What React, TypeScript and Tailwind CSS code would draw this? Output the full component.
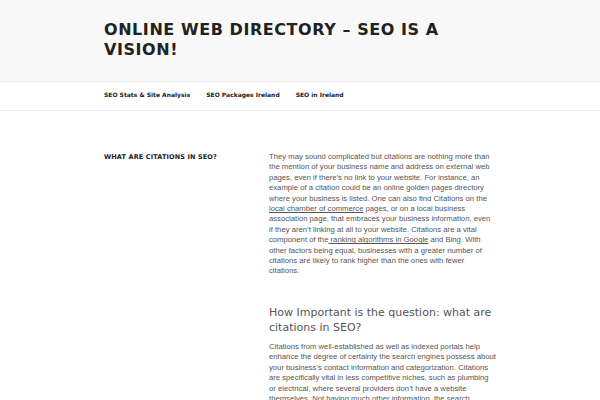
export default function App() {
  return (
    <div className="min-h-screen w-full bg-white overflow-hidden">
      {/* Header */}
      <header className="bg-[#f8f8f8] h-[81px]">
        <div className="w-[392px] mx-auto pt-[20px]">
          <h1 className="font-['DejaVu_Sans',sans-serif] font-bold uppercase text-[#222] text-[16px] leading-[20px] tracking-[0.035em]">
            Online Web Directory – SEO is a Vision!
          </h1>
        </div>
      </header>

      {/* Nav */}
      <nav className="border-y border-[#eeeeee] h-[30px] flex items-center pb-[4px]">
        <ul className="w-[392px] mx-auto flex gap-[16px] font-['DejaVu_Sans',sans-serif] font-bold text-[6px] text-[#222]">
          <li>SEO Stats &amp; Site Analysis</li>
          <li>SEO Packages Ireland</li>
          <li>SEO in Ireland</li>
        </ul>
      </nav>

      {/* Content */}
      <main className="w-[392px] mx-auto pt-[41px] flex">
        <div className="w-[165px] shrink-0">
          <h2 className="font-['DejaVu_Sans',sans-serif] font-bold uppercase text-[6.5px] tracking-[0.02em] text-[#222] leading-[10px]">
            What are citations in SEO?
          </h2>
        </div>
        <div className="w-[230px] font-['Liberation_Sans',sans-serif] text-[7.7px] leading-[10.4px] text-[#555]">
          <p>
            They may sound complicated but citations are nothing more than the mention of your business name and address on external web pages, even if there’s no link to your website. For instance, an example of a citation could be an online golden pages directory where your business is listed. One can also find Citations on the{' '}
            <a className="underline">local chamber of commerce</a> pages, or on a local business association page, that embraces your business information, even if they aren’t linking at all to your website. Citations are a vital component of the<a className="underline"> ranking algorithms in Google</a> and Bing. With other factors being equal, businesses with a greater number of citations are likely to rank higher than the ones with fewer citations.
          </p>
          <h3 className="mt-[28px] font-['DejaVu_Sans',sans-serif] text-[11px] leading-[15px] text-[#555]">
            How Important is the question: what are citations in SEO?
          </h3>
          <p className="mt-[7px]">
            Citations from well-established as well as indexed portals help enhance the degree of certainty the search engines possess about your business’s contact information and categorization. Citations are specifically vital in less competitive niches, such as plumbing or electrical, where several providers don’t have a website themselves. Not having much other information, the search engines rely on citations.
          </p>
        </div>
      </main>
    </div>
  );
}
